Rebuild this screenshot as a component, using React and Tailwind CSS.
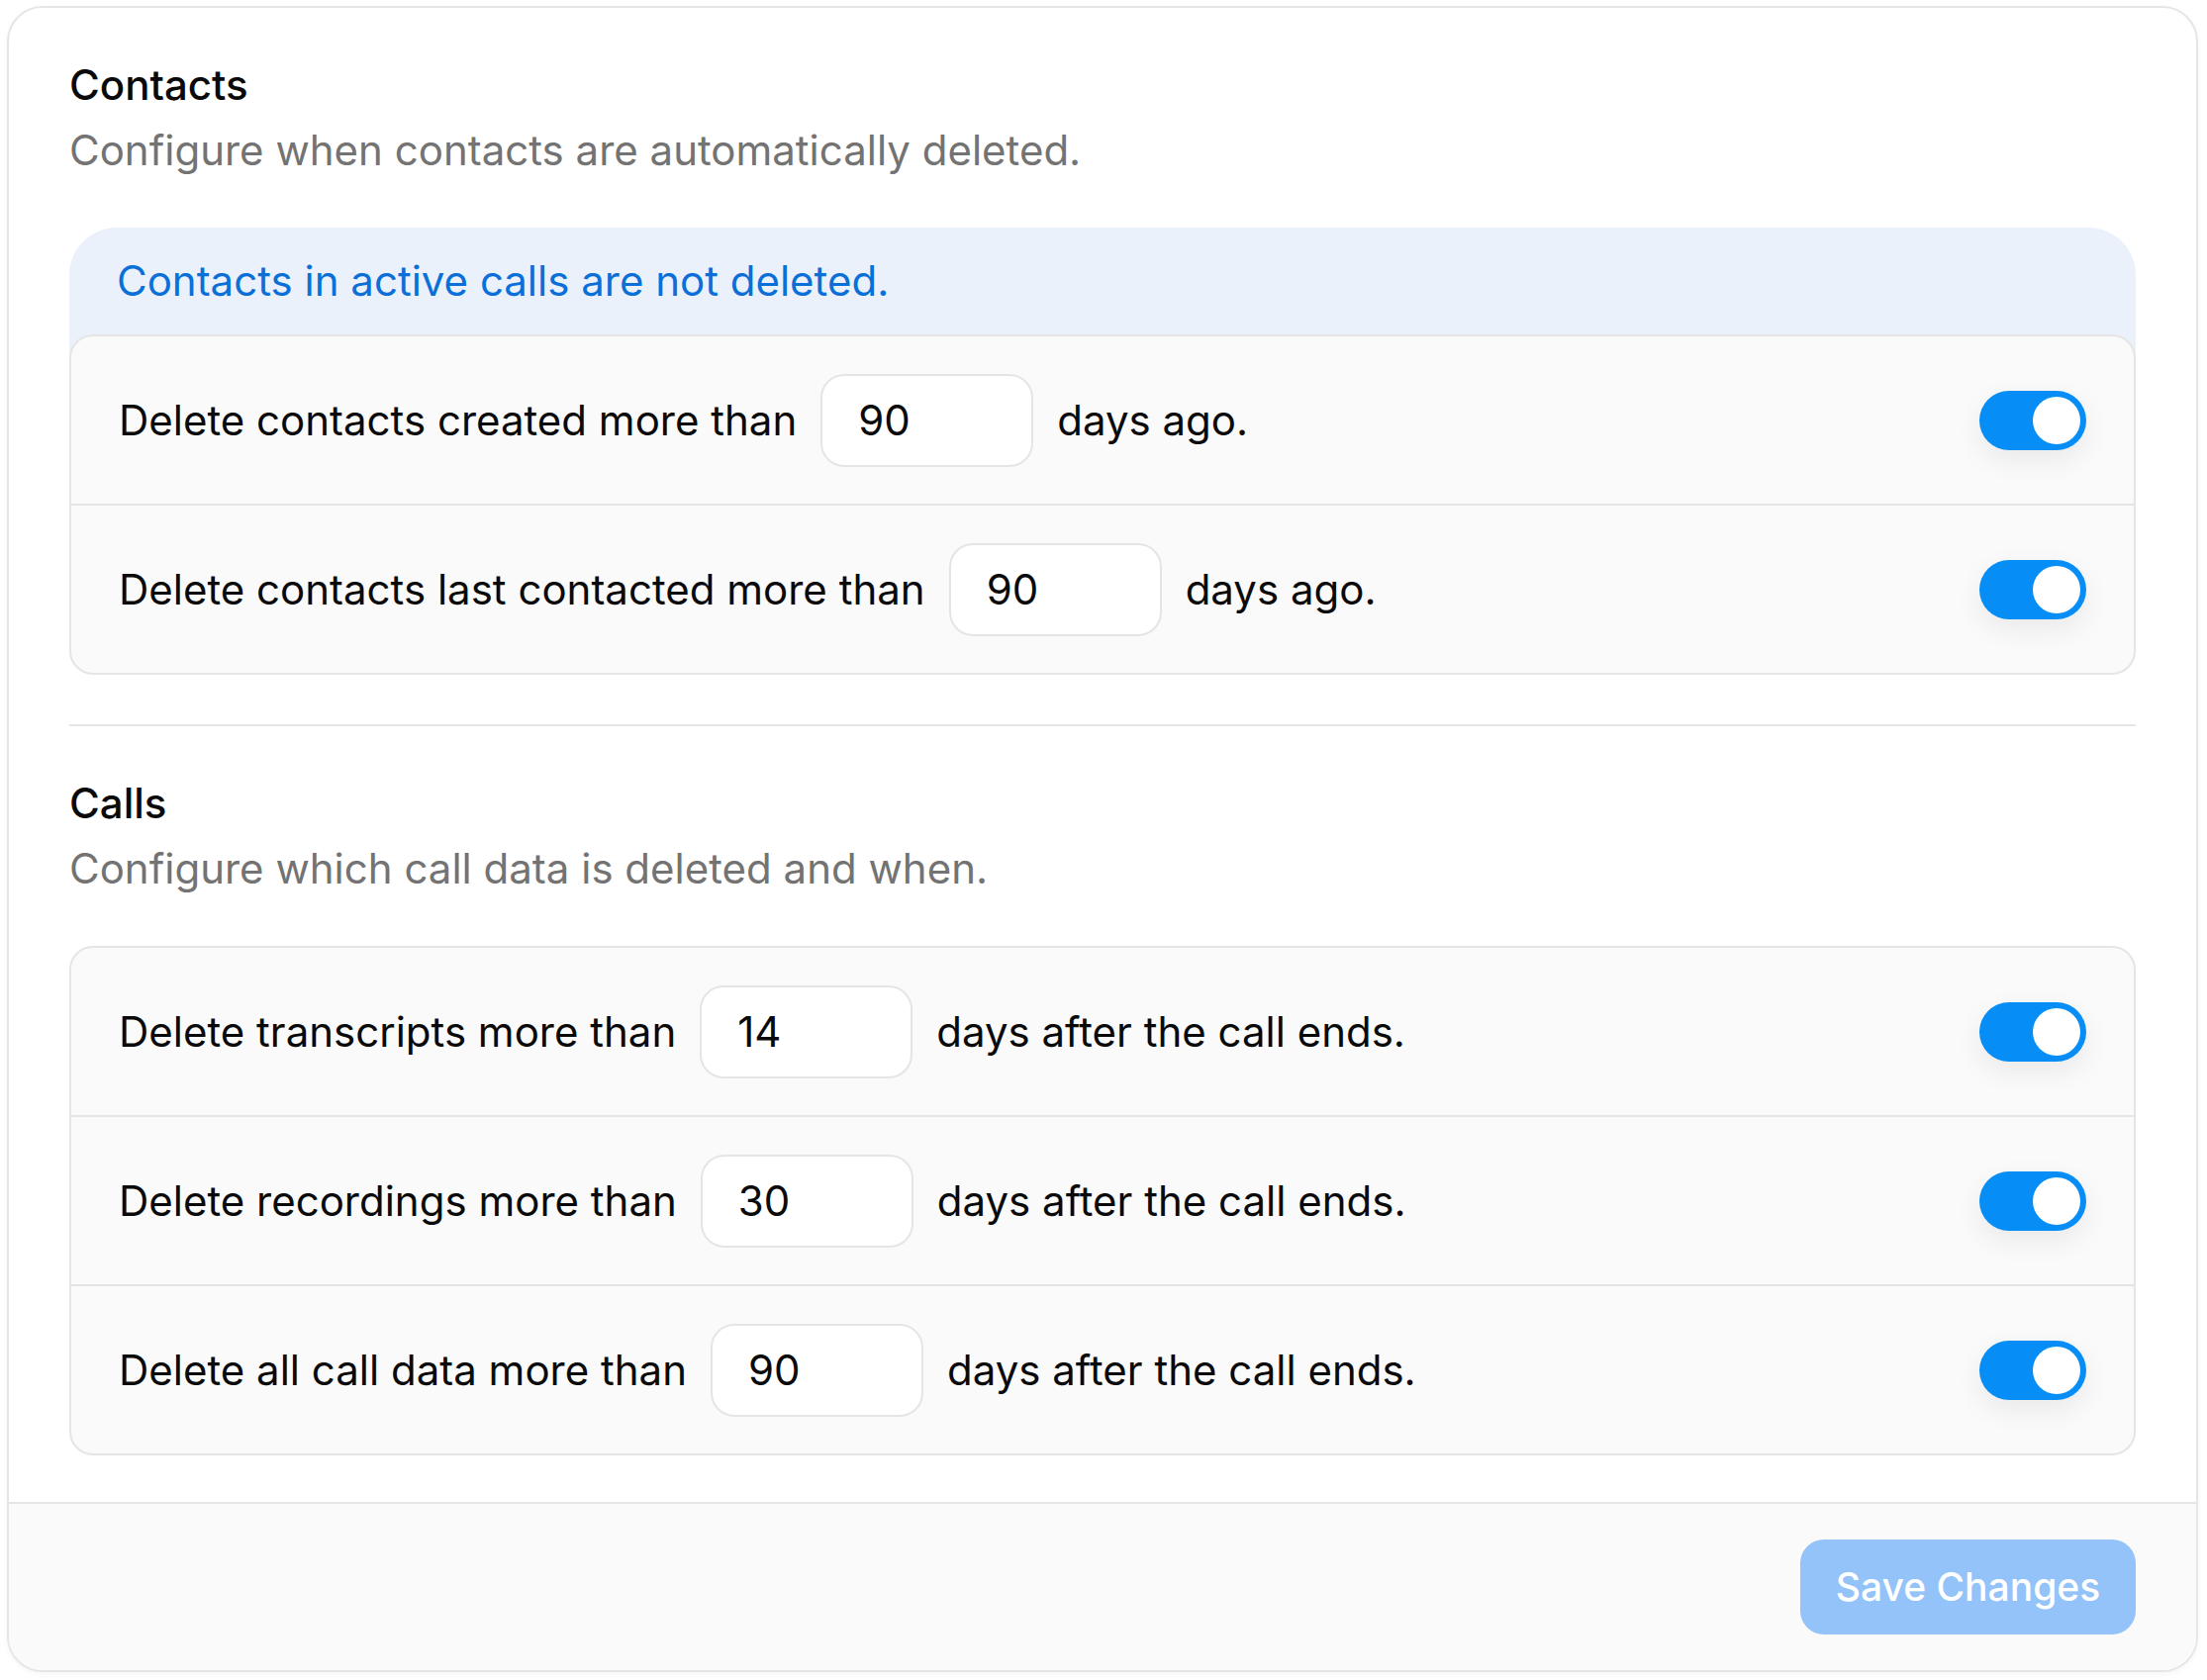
import { useState } from "react";

// data retention settings: two groups of rules, each with a day count and a switch
const CONTACT_RULES = [
  { id: "created", before: "Delete contacts created more than", days: "90", after: "days ago." },
  { id: "contacted", before: "Delete contacts last contacted more than", days: "90", after: "days ago." },
];

const CALL_RULES = [
  { id: "transcripts", before: "Delete transcripts more than", days: "14", after: "days after the call ends." },
  { id: "recordings", before: "Delete recordings more than", days: "30", after: "days after the call ends." },
  { id: "all", before: "Delete all call data more than", days: "90", after: "days after the call ends." },
];

function Toggle({ on, onChange }) {
  return (
    <button
      type="button"
      onClick={() => onChange(!on)}
      className={`ml-auto flex h-[60px] w-[108px] shrink-0 items-center rounded-full p-[6px] shadow-[0_10px_28px_rgba(0,0,0,0.07)] ${
        on ? "justify-end bg-[#068ef6]" : "justify-start bg-[#d4d4d4]"
      }`}
    >
      <span className="block h-[48px] w-[48px] rounded-full bg-white" />
    </button>
  );
}

function RuleRow({ rule, first }) {
  const [on, setOn] = useState(true);
  const [days, setDays] = useState(rule.days);
  // rows after the first carry a 2px top border, so they are 2px taller
  return (
    <div
      className={`flex items-center gap-[24px] px-[48px] ${
        first ? "h-[169px]" : "h-[171px] border-t-2 border-[#e5e5e5]"
      }`}
    >
      <span className="whitespace-nowrap">{rule.before}</span>
      <input
        value={days}
        onChange={(e) => setDays(e.target.value)}
        className="h-[94px] w-[215px] shrink-0 rounded-[24px] border-2 border-[#e5e5e5] bg-white px-[36px] text-[42px] text-[#0a0a0a] outline-none"
      />
      <span className="whitespace-nowrap">{rule.after}</span>
      <Toggle on={on} onChange={setOn} />
    </div>
  );
}

function RuleCard({ rules, className = "" }) {
  return (
    <div className={`rounded-[24px] border-2 border-[#e5e5e5] bg-[#fafafa] ${className}`}>
      {rules.map((r, i) => (
        <RuleRow key={r.id} rule={r} first={i === 0} />
      ))}
    </div>
  );
}

function SectionHead({ title, desc }) {
  return (
    <>
      <h2 className="font-medium text-[#0a0a0a]">{title}</h2>
      <p className="mt-[10px] text-[#737373]">{desc}</p>
    </>
  );
}

export default function App() {
  return (
    <div className="min-h-screen bg-white pl-[7px] pt-[6px] font-['Inter',sans-serif] text-[42px] leading-[56px] text-[#0a0a0a]">
      <div className="w-[2214px] overflow-hidden rounded-[36px] border-2 border-[#e6e6e6] bg-white shadow-[0_2px_6px_rgba(0,0,0,0.04)]">
        <div className="px-[61px] pb-[47px] pt-[50px]">
          <SectionHead title="Contacts" desc="Configure when contacts are automatically deleted." />

          <div className="mt-[50px] rounded-t-[48px] bg-[#eaf1fb] px-[48px] pb-[50px] pt-[26px] text-[#0a70d8]">
            Contacts in active calls are not deleted.
          </div>
          <RuleCard rules={CONTACT_RULES} className="relative -mt-[24px]" />

          <div className="my-[50px] h-[2px] bg-[#e5e5e5]" />

          <SectionHead title="Calls" desc="Configure which call data is deleted and when." />
          <RuleCard rules={CALL_RULES} className="mt-[50px]" />
        </div>

        <div className="flex justify-end border-t-2 border-[#e5e5e5] bg-[#fafafa] px-[61px] py-[36px]">
          <button
            type="button"
            disabled
            className="h-[96px] w-[339px] rounded-[24px] bg-[#93c3f9] text-center text-[39px] font-medium text-white"
          >
            Save Changes
          </button>
        </div>
      </div>
    </div>
  );
}
